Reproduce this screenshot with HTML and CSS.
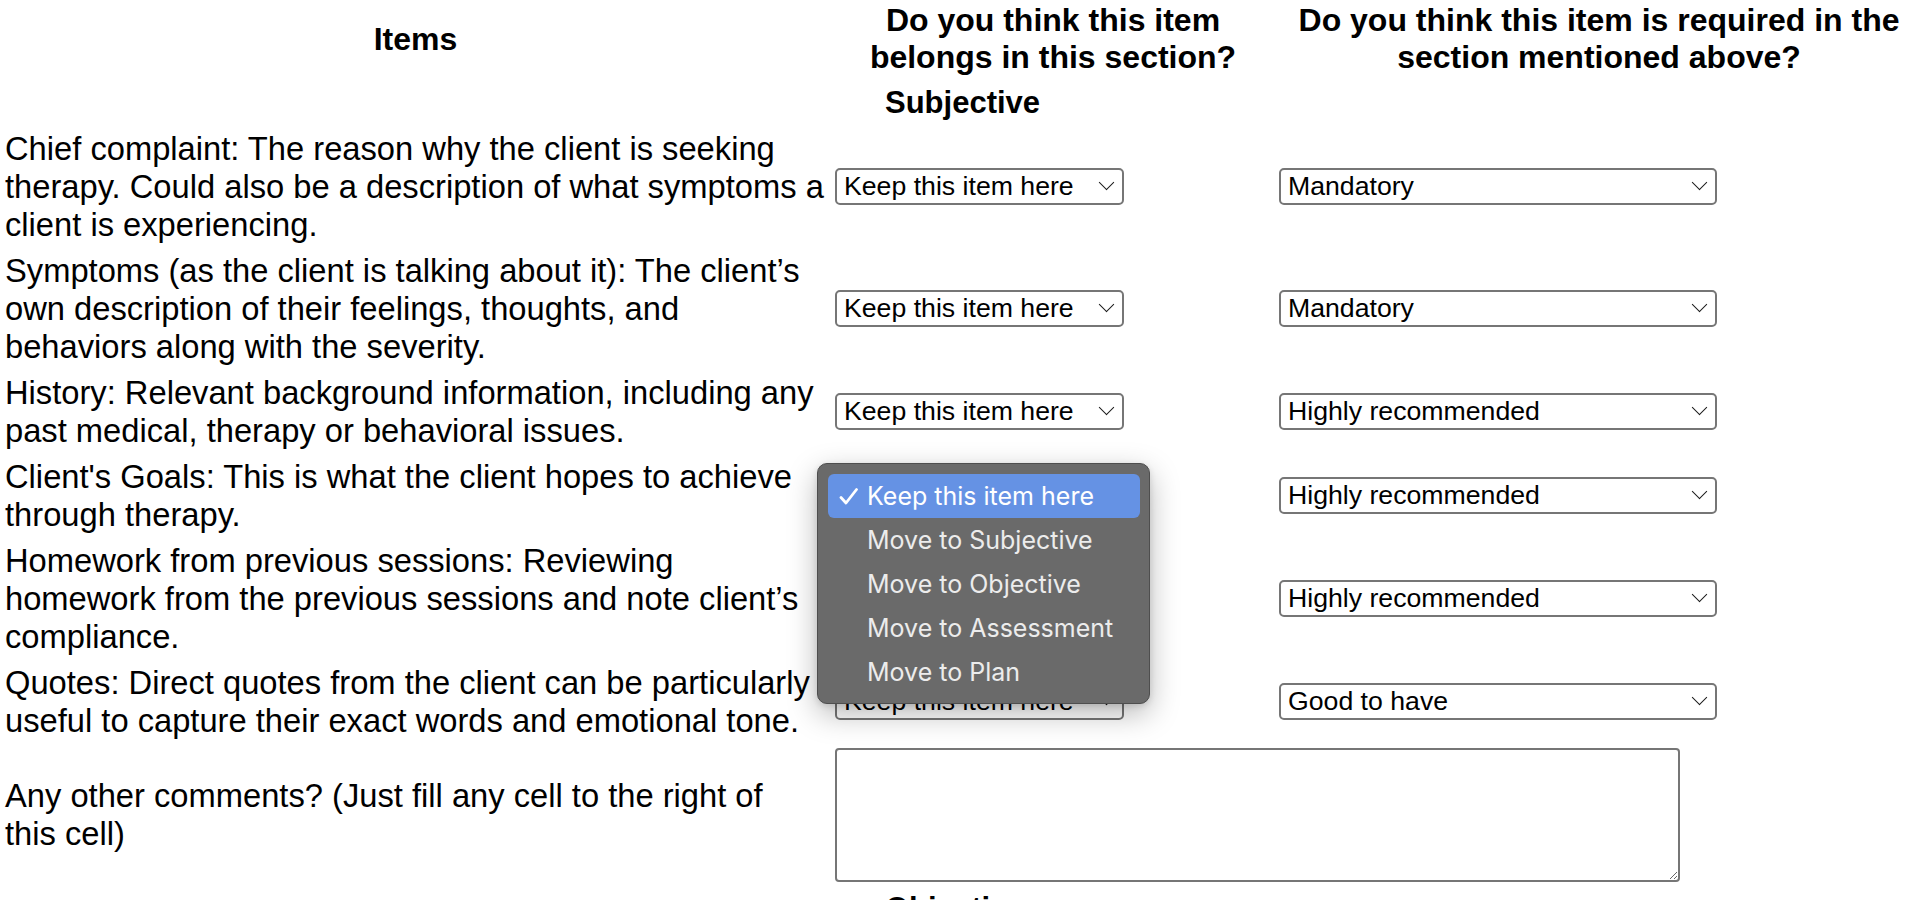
FILE: index.html
```html
<!DOCTYPE html>
<html lang="en">
<head>
<meta charset="utf-8">
<title>SOAP note survey</title>
<link rel="stylesheet" href="styles.css">
</head>
<body>
<table class="survey">
  <colgroup>
    <col class="col-item">
    <col class="col-place">
    <col class="col-req">
  </colgroup>
  <thead>
    <tr>
      <th>Items</th>
      <th>Do you think this item belongs in this section?</th>
      <th class="th-req">Do you think this item is required in the section mentioned above?</th>
    </tr>
  </thead>
  <tbody>
    <tr>
      <td></td>
      <td class="section-name" colspan="2">Subjective</td>
    </tr>
    <tr>
      <td class="item">Chief complaint: The reason why the client is seeking<br>therapy. Could also be a description of what symptoms a<br>client is experiencing.</td>
      <td class="ctl"><span class="pick pick-place"><select><option>Keep this item here</option><option>Move to Subjective</option><option>Move to Objective</option><option>Move to Assessment</option><option>Move to Plan</option></select></span></td>
      <td class="ctl"><span class="pick pick-req"><select><option>Mandatory</option><option>Highly recommended</option><option>Good to have</option></select></span></td>
    </tr>
    <tr>
      <td class="item">Symptoms (as the client is talking about it): The client’s<br>own description of their feelings, thoughts, and<br>behaviors along with the severity.</td>
      <td class="ctl"><span class="pick pick-place"><select><option>Keep this item here</option><option>Move to Subjective</option><option>Move to Objective</option><option>Move to Assessment</option><option>Move to Plan</option></select></span></td>
      <td class="ctl"><span class="pick pick-req"><select><option>Mandatory</option><option>Highly recommended</option><option>Good to have</option></select></span></td>
    </tr>
    <tr>
      <td class="item">History: Relevant background information, including any<br>past medical, therapy or behavioral issues.</td>
      <td class="ctl"><span class="pick pick-place"><select><option>Keep this item here</option><option>Move to Subjective</option><option>Move to Objective</option><option>Move to Assessment</option><option>Move to Plan</option></select></span></td>
      <td class="ctl"><span class="pick pick-req"><select><option>Highly recommended</option><option>Mandatory</option><option>Good to have</option></select></span></td>
    </tr>
    <tr>
      <td class="item">Client's Goals: This is what the client hopes to achieve<br>through therapy.</td>
      <td class="ctl"><span class="pick pick-place"><select><option>Keep this item here</option><option>Move to Subjective</option><option>Move to Objective</option><option>Move to Assessment</option><option>Move to Plan</option></select></span></td>
      <td class="ctl"><span class="pick pick-req"><select><option>Highly recommended</option><option>Mandatory</option><option>Good to have</option></select></span></td>
    </tr>
    <tr>
      <td class="item">Homework from previous sessions: Reviewing<br>homework from the previous sessions and note client’s<br>compliance.</td>
      <td class="ctl"><span class="pick pick-place"><select><option>Keep this item here</option><option>Move to Subjective</option><option>Move to Objective</option><option>Move to Assessment</option><option>Move to Plan</option></select></span></td>
      <td class="ctl"><span class="pick pick-req"><select><option>Highly recommended</option><option>Mandatory</option><option>Good to have</option></select></span></td>
    </tr>
    <tr>
      <td class="item">Quotes: Direct quotes from the client can be particularly<br>useful to capture their exact words and emotional tone.</td>
      <td class="ctl"><span class="pick pick-place"><select><option>Keep this item here</option><option>Move to Subjective</option><option>Move to Objective</option><option>Move to Assessment</option><option>Move to Plan</option></select></span></td>
      <td class="ctl"><span class="pick pick-req"><select><option>Good to have</option><option>Mandatory</option><option>Highly recommended</option></select></span></td>
    </tr>
    <tr>
      <td class="item">Any other comments? (Just fill any cell to the right of<br>this cell)</td>
      <td class="ctl" colspan="2"><textarea class="notes"></textarea></td>
    </tr>
    <tr>
      <td></td>
      <td class="section-name" colspan="2">Objective</td>
    </tr>
  </tbody>
</table>

<ul class="menu">
  <li class="on"><svg class="tick" viewBox="0 0 19 17" width="19" height="17"><path d="M2 9.5 L7 15 L17.5 1.5" fill="none" stroke="#fff" stroke-width="2.8" stroke-linecap="round" stroke-linejoin="round"/></svg>Keep this item here</li>
  <li>Move to Subjective</li>
  <li>Move to Objective</li>
  <li>Move to Assessment</li>
  <li>Move to Plan</li>
</ul>
</body>
</html>
```

FILE: styles.css
```css
html, body {
  margin: 0;
  background: #ffffff;
}

body {
  font-family: "Liberation Sans", Arial, sans-serif;
  color: #000000;
  overflow: hidden;
}

.survey {
  width: 1914px;
  table-layout: fixed;
  border-collapse: collapse;
}

.col-item { width: 831px; }
.col-place { width: 444px; }
.col-req { width: 639px; }

.survey th {
  font-size: 32px;
  font-weight: 700;
  line-height: 37px;
  padding: 2px 0 4px;
  text-align: center;
  vertical-align: middle;
}

.survey th.th-req {
  padding-left: 9px;
}

.survey td {
  padding: 4px 0;
  vertical-align: middle;
  font-size: 32.7px;
  line-height: 38px;
}

.survey td.item {
  padding-left: 5px;
}

.survey td.ctl {
  padding-left: 4px;
}

.survey td.section-name {
  padding-left: 54px;
  font-size: 31px;
  font-weight: 700;
}

.pick {
  position: relative;
  display: block;
  margin-top: -2px;
}

.pick-place { width: 289px; }
.pick-req { width: 438px; }

.pick select {
  -webkit-appearance: none;
  appearance: none;
  display: block;
  box-sizing: border-box;
  width: 100%;
  height: 37px;
  margin: 0;
  padding: 0 34px 0 7px;
  border: 2px solid #767676;
  border-radius: 5px;
  background: #ffffff;
  color: #000000;
  font-family: "Liberation Sans", Arial, sans-serif;
  font-size: 26.67px;
  line-height: normal;
}

.pick::after {
  content: "";
  position: absolute;
  right: 12px;
  top: 50%;
  width: 10px;
  height: 10px;
  margin-top: -9px;
  border-right: 1.6px solid #1a1a1a;
  border-bottom: 1.6px solid #1a1a1a;
  transform: rotate(45deg);
  pointer-events: none;
}

.notes {
  display: block;
  box-sizing: border-box;
  width: 845px;
  height: 134px;
  margin: 0;
  border: 2px solid #767676;
  border-radius: 4px;
  background: #ffffff;
  font-family: "Liberation Sans", Arial, sans-serif;
  font-size: 26px;
  resize: both;
}

.menu {
  position: absolute;
  left: 817px;
  top: 463px;
  width: 333px;
  box-sizing: border-box;
  margin: 0;
  padding: 10px 9px 9px 10px;
  list-style: none;
  background: #6a6a6a;
  border: 1px solid #4e4e4e;
  border-radius: 10px;
  box-shadow: 0 10px 30px rgba(0, 0, 0, 0.28), 0 2px 6px rgba(0, 0, 0, 0.12);
  font-family: Inter, "Liberation Sans", sans-serif;
  font-size: 25px;
  color: #ececec;
}

.menu li {
  position: relative;
  display: flex;
  align-items: center;
  height: 44px;
  padding-left: 39px;
  border-radius: 6px;
}

.menu li.on {
  background: #6592e4;
  color: #ffffff;
}

.menu .tick {
  position: absolute;
  left: 11px;
  top: 14px;
}
```
